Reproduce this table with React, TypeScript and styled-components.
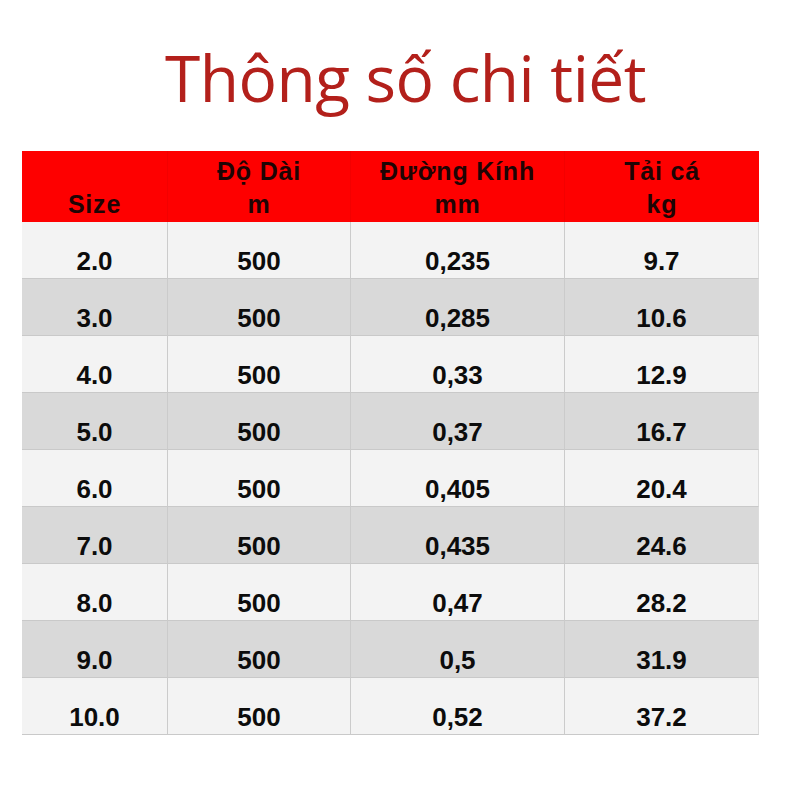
import styled, { createGlobalStyle } from "styled-components";

const GlobalStyle = createGlobalStyle`
  html, body {
    margin: 0;
    padding: 0;
    background: #ffffff;
  }
`;

const Page = styled.div`
  width: 787px;
  height: 787px;
  background: #ffffff;
  box-sizing: border-box;
  padding-left: 22px;
`;

const Title = styled.h1`
  margin: 0;
  height: 151px;
  box-sizing: border-box;
  padding-top: 38px;
  padding-left: 30px;
  width: 737px;
  text-align: center;
  font-family: "Open Sans", "Noto Sans", sans-serif;
  font-weight: 400;
  font-size: 64px;
  line-height: 80px;
  letter-spacing: -0.5px;
  color: #b3201b;
`;

const Table = styled.div`
  display: grid;
  grid-template-columns: 145px 183px 214px 195px;
  width: 737px;
  font-family: "Liberation Sans", Arial, sans-serif;
  font-weight: 700;
`;

const HeadCell = styled.div<{ $bottom?: boolean }>`
  height: 71px;
  box-sizing: border-box;
  padding-top: 4px;
  background: #fe0000;
  color: #1e0404;
  font-size: 25px;
  letter-spacing: 0.8px;
  line-height: 33px;
  text-align: center;
  display: flex;
  flex-direction: column;
  justify-content: ${(p) => (p.$bottom ? "flex-end" : "flex-start")};
  padding-bottom: ${(p) => (p.$bottom ? "1px" : "0")};
  border-left: 1px solid rgba(120, 0, 0, 0.08);
  &:first-child {
    border-left: none;
  }
`;

const Cell = styled.div<{ $shade: boolean; $first: boolean; $last: boolean }>`
  height: 57px;
  box-sizing: border-box;
  padding-top: 21px;
  line-height: 36px;
  font-size: 26px;
  color: #0c0c0c;
  text-align: center;
  background: ${(p) => (p.$shade ? "#d9d9d9" : "#f3f3f3")};
  border-left: ${(p) => (p.$first ? "none" : "1px solid #cbcbcb")};
  border-right: ${(p) => (p.$last ? "1px solid #dcdcdc" : "none")};
  border-bottom: 1px solid #c9c9c9;
`;

const rows = [
  ["2.0", "500", "0,235", "9.7"],
  ["3.0", "500", "0,285", "10.6"],
  ["4.0", "500", "0,33", "12.9"],
  ["5.0", "500", "0,37", "16.7"],
  ["6.0", "500", "0,405", "20.4"],
  ["7.0", "500", "0,435", "24.6"],
  ["8.0", "500", "0,47", "28.2"],
  ["9.0", "500", "0,5", "31.9"],
  ["10.0", "500", "0,52", "37.2"],
];

export default function App() {
  return (
    <Page>
      <GlobalStyle />
      <Title>Thông số chi tiết</Title>
      <Table>
        <HeadCell $bottom>
          <span>Size</span>
        </HeadCell>
        <HeadCell>
          <span>Độ Dài</span>
          <span>m</span>
        </HeadCell>
        <HeadCell>
          <span>Đường Kính</span>
          <span>mm</span>
        </HeadCell>
        <HeadCell>
          <span>Tải cá</span>
          <span>kg</span>
        </HeadCell>
        {rows.map((row, i) =>
          row.map((value, j) => (
            <Cell
              key={`${i}-${j}`}
              $shade={i % 2 === 1}
              $first={j === 0}
              $last={j === row.length - 1}
            >
              {value}
            </Cell>
          ))
        )}
      </Table>
    </Page>
  );
}
